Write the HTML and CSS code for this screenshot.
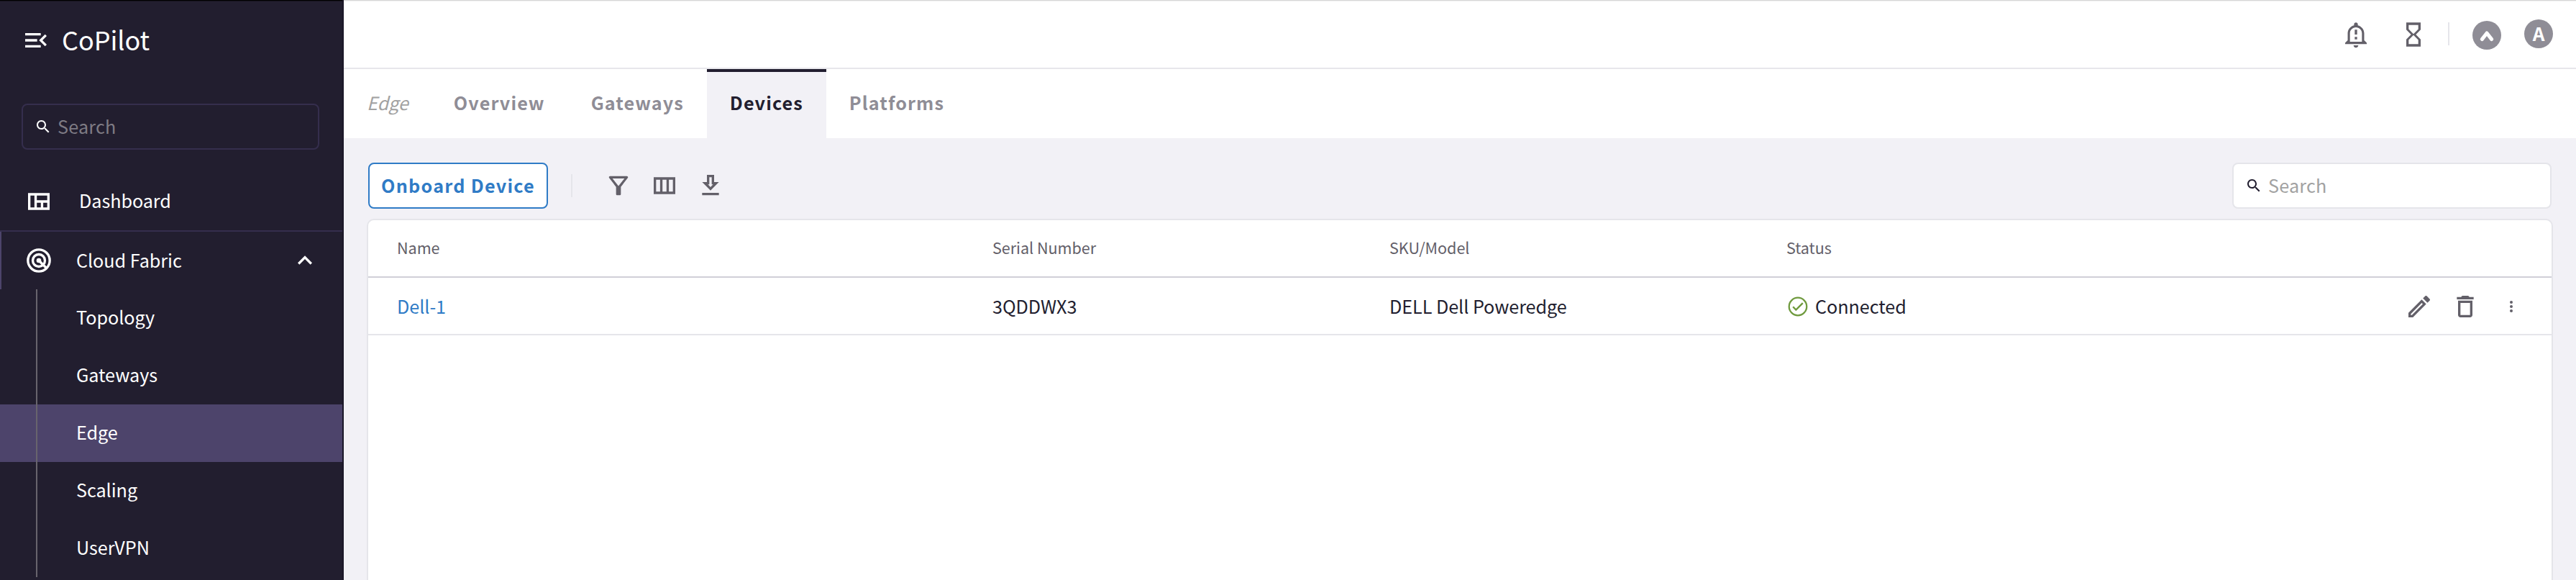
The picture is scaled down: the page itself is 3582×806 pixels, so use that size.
FILE: index.html
```html
<!DOCTYPE html>
<html lang="en">
<head>
<meta charset="utf-8">
<meta name="viewport" content="width=device-width, initial-scale=1.0">
<title>CoPilot - Edge Devices</title>
<link rel="stylesheet" href="styles.css">
</head>
<body>
<aside class="sidebar">
  <div class="brand">
    <svg class="icon" viewBox="0 0 24 24"><path d="M3 18h13v-2H3v2zm0-5h10v-2H3v2zm0-7v2h13V6H3zm18 9.59L17.42 12 21 8.41 19.59 7l-5 5 5 5L21 15.59z"/></svg>
    <span class="brand-name">CoPilot</span>
  </div>
  <div class="search search-dark">
    <svg class="icon-sm" viewBox="0 0 24 24"><path d="M15.5 14h-.79l-.28-.27C15.41 12.59 16 11.11 16 9.5 16 5.91 13.09 3 9.5 3S3 5.91 3 9.5 5.91 16 9.5 16c1.61 0 3.09-.59 4.23-1.57l.27.28v.79l5 4.99L20.49 19l-4.99-5zm-6 0C7.01 14 5 11.99 5 9.5S7.01 5 9.5 5 14 7.01 14 9.5 11.99 14 9.5 14z"/></svg>
    <span>Search</span>
  </div>
  <nav class="nav">
    <a class="nav-item dashboard">
      <svg class="icon" viewBox="0 0 24 24"><path fill-rule="evenodd" d="M3 5h18v14H3zM5 7v10h3.33V7zM10.33 7v4H19V7zM10.33 13v4h3.34v-4zM15.67 13v4H19v-4z"/></svg>
      <span>Dashboard</span>
    </a>
    <a class="nav-item nav-group">
      <svg class="icon" viewBox="0 0 24 24"><g fill="none" stroke="currentColor" stroke-width="2"><circle cx="12" cy="12" r="9.1"/><circle cx="12" cy="12" r="5.1"/><path d="M12 12l6.3 6.3"/></g><circle cx="12" cy="12" r="2"/></svg>
      <span>Cloud Fabric</span>
      <svg class="icon chevron" viewBox="0 0 24 24"><path d="M12 8l-6 6 1.41 1.41L12 10.83l4.59 4.58L18 14z"/></svg>
    </a>
    <div class="subnav">
      <a class="sub-item">Topology</a>
      <a class="sub-item">Gateways</a>
      <a class="sub-item active">Edge</a>
      <a class="sub-item">Scaling</a>
      <a class="sub-item">UserVPN</a>
    </div>
  </nav>
</aside>

<main class="main">
  <header class="topbar">
    <svg class="icon bell" viewBox="0 0 24 24"><path fill-rule="evenodd" d="M10.01 21.01c0 1.1.89 1.99 1.99 1.99s1.99-.89 1.99-1.99zM18.88 16.82V11c0-3.25-2.25-5.97-5.29-6.69v-.72C13.59 2.71 12.88 2 12 2s-1.59.71-1.59 1.59v.72C7.37 5.03 5.12 7.75 5.12 11v5.82L3 18.94V20h18v-1.06zM17 18H7v-7c0-2.76 2.24-5 5-5s5 2.24 5 5zM11 8h2v4h-2zM11 14h2v2h-2z"/></svg>
    <svg class="icon" viewBox="0 0 24 24"><path d="M6 2v6h.01L6 8.01 10 12l-4 4 .01.01H6V22h12v-5.99h-.01L18 16l-4-4 4-3.99-.01-.01H18V2H6zm10 14.5V20H8v-3.5l4-4 4 4zm-4-5l-4-4V4h8v3.5l-4 4z"/></svg>
    <span class="divider"></span>
    <span class="circle circle-logo"><svg viewBox="0 0 40 40"><path d="M13.3 25.6L20 17l6.7 8.6" fill="none" stroke="#fff" stroke-width="5" stroke-linecap="round" stroke-linejoin="round"/></svg></span>
    <span class="circle avatar">A</span>
  </header>

  <div class="tabs">
    <span class="crumb">Edge</span>
    <a class="tab">Overview</a>
    <a class="tab">Gateways</a>
    <a class="tab tab-active">Devices</a>
    <a class="tab">Platforms</a>
  </div>

  <section class="content">
    <div class="toolbar">
      <button class="btn">Onboard Device</button>
      <span class="divider"></span>
      <div class="tools">
        <svg class="icon" viewBox="0 0 24 24"><path d="M7 6h10l-5.01 6.3L7 6zm-2.75-.39C6.27 8.2 10 13 10 13v6c0 .55.45 1 1 1h2c.55 0 1-.45 1-1v-6s3.72-4.8 5.74-7.39c.51-.66.04-1.61-.79-1.61H5.04c-.83 0-1.3.95-.79 1.61z"/></svg>
        <svg class="icon" viewBox="0 0 24 24"><path fill-rule="evenodd" d="M3 5h18v14H3zM5 7v10h3.33V7zM10.33 7v10h3.34V7zM15.67 7v10H19V7z"/></svg>
        <svg class="icon" viewBox="0 0 24 24"><path d="M19 9h-4V3H9v6H5l7 7 7-7zm-8 2V5h2v6h1.17L12 13.17 9.83 11H11zm-6 7h14v2H5z"/></svg>
      </div>
      <div class="search search-light">
        <svg class="icon-sm" viewBox="0 0 24 24"><path d="M15.5 14h-.79l-.28-.27C15.41 12.59 16 11.11 16 9.5 16 5.91 13.09 3 9.5 3S3 5.91 3 9.5 5.91 16 9.5 16c1.61 0 3.09-.59 4.23-1.57l.27.28v.79l5 4.99L20.49 19l-4.99-5zm-6 0C7.01 14 5 11.99 5 9.5S7.01 5 9.5 5 14 7.01 14 9.5 11.99 14 9.5 14z"/></svg>
        <span>Search</span>
      </div>
    </div>

    <div class="table">
      <div class="row row-head">
        <span>Name</span>
        <span>Serial Number</span>
        <span>SKU/Model</span>
        <span>Status</span>
      </div>
      <div class="row">
        <a class="link">Dell-1</a>
        <span>3QDDWX3</span>
        <span>DELL Dell Poweredge</span>
        <span class="status">
          <svg class="icon-status" viewBox="0 0 24 24"><g fill="none" stroke="currentColor"><circle cx="12" cy="12" r="9.2" stroke-width="1.7"/><path d="M6.9 12.2l3.1 3.2 7.1-7.1" stroke-width="1.8"/></g></svg>
          Connected
        </span>
        <span class="actions">
          <svg class="icon" viewBox="0 0 24 24"><path d="M14.06 9.02l.92.92L5.92 19H5v-.92l9.06-9.06M17.66 3c-.25 0-.51.1-.7.29l-1.83 1.83 3.75 3.75 1.83-1.83c.39-.39.39-1.02 0-1.41l-2.34-2.34c-.2-.2-.45-.29-.71-.29zm-3.6 3.19L3 17.25V21h3.75L17.81 9.94l-3.75-3.75z"/></svg>
          <svg class="icon" viewBox="0 0 24 24"><path d="M6 19c0 1.1.9 2 2 2h8c1.1 0 2-.9 2-2V7H6v12zM8 9h8v10H8V9zm7.5-5l-1-1h-5l-1 1H5v2h14V4h-3.5z"/></svg>
          <svg class="icon-sm more" viewBox="0 0 24 24"><circle cx="12" cy="6" r="2"/><circle cx="12" cy="12" r="2"/><circle cx="12" cy="18" r="2"/></svg>
        </span>
      </div>
    </div>
  </section>
</main>
</body>
</html>
```
FILE: styles.css
```css
* { box-sizing: border-box; }

body {
  margin: 0;
  height: 806px;
  display: flex;
  overflow: hidden;
  font-family: "Noto Sans CJK SC", "Noto Sans", sans-serif;
  font-size: 25.2px;
  line-height: 36px;
  letter-spacing: -0.05px;
  color: #221e2f;
  background: #f2f1f6;
}

svg { display: block; fill: currentColor; flex: none; }
.icon { width: 40px; height: 40px; }
.icon-sm { width: 24px; height: 24px; }

/* sidebar */
.sidebar {
  width: 478px;
  flex: none;
  background: #221e2f;
  color: #fff;
  border-right: 2px solid #1b1728;
  box-shadow: inset 0 1px #000, inset 0 2px #16131f;
}
.brand { display: flex; align-items: center; height: 112px; padding: 0 0 0 30px; }
.brand-name { font-size: 36px; margin-left: 16px; padding-bottom: 4px; }

.search {
  display: flex;
  align-items: center;
  height: 64px;
  padding-left: 16px;
  border: 2px solid #e5e5ea;
  border-radius: 8px;
  gap: 8px;
}
.search span { padding-bottom: 2px; letter-spacing: 0.2px; }
.search-dark { width: 414px; margin: 32px 0 0 30px; border-color: #352e4d; }
.search-dark span { color: #7e7b84; }
.search-light { width: 444px; margin-left: auto; margin-right: 2px; background: #fff; }
.search-light span { color: #a2a2a2; }

.nav { margin-top: 32px; }
.nav-item { display: flex; align-items: center; height: 80px; padding-left: 34px; }
.nav-item span { margin-left: 36px; padding-bottom: 4px; }
.dashboard { border-bottom: 2px solid #352e4d; height: 82px; }
.nav-group { border-left: 2px solid #4d446b; padding-left: 32px; }
.nav-group span { margin-left: 32px; padding-bottom: 2px; }
.chevron { margin-left: auto; margin-right: 32px; }

.subnav {
  background: linear-gradient(#68646d, #68646d) 50px 0 / 2px 400px no-repeat;
}
.sub-item { display: flex; align-items: center; height: 80px; padding: 0 0 4px 106px; }
.active {
  background: linear-gradient(#68646d, #68646d) 50px 0 / 2px 80px no-repeat #4d446b;
}

/* top bar */
.main { flex: 1; display: flex; flex-direction: column; min-width: 0; }
.topbar {
  display: flex;
  align-items: center;
  justify-content: flex-end;
  height: 96px;
  padding-right: 32px;
  background: #fff;
  border-bottom: 2px solid #e7e6eb;
  box-shadow: inset 0 1px #d6d6d6, inset 0 2px #f1f1f1;
  color: #636069;
}
.topbar .icon { margin-top: 2px; }
.bell { margin-right: 40px; }
.divider { width: 2px; height: 32px; background: #e5e5ea; }
.topbar .divider { margin: 0 32px 0 28px; }
.circle {
  width: 40px;
  height: 40px;
  border-radius: 50%;
  background: #8f8d96;
  color: #fff;
}
.circle-logo { margin-right: 32px; margin-top: 4px; }
.avatar {
  line-height: 38px;
  text-align: center;
  font-weight: 700;
  font-size: 26px;
  letter-spacing: 0;
}

.tabs { display: flex; height: 96px; background: #fff; line-height: 84px; padding-left: 32px; }
.crumb { font-style: italic; color: #a2a2a2; margin-right: 31px; border-top: 4px solid transparent; }
.tab {
  padding: 0 32px;
  font-weight: 700;
  letter-spacing: 1.1px;
  color: #8f8d96;
  border-top: 4px solid transparent;
}
.tab-active { background: #f2f1f6; color: #221e2f; border-top-color: #221e2f; }

/* devices list */
.content { flex: 1; display: flex; flex-direction: column; padding: 34px 32px 0; }
.toolbar { display: flex; align-items: center; height: 64px; padding-left: 2px; }
.btn {
  width: 250px;
  height: 64px;
  padding: 0 0 2px;
  border: 2px solid #2f7bc6;
  border-radius: 8px;
  background: #fff;
  color: #2f7bc6;
  font: inherit;
  font-weight: 700;
  letter-spacing: 1.25px;
  white-space: nowrap;
}
.toolbar .divider { margin: 0 44px 0 32px; }
.tools { display: flex; gap: 24px; color: #636069; }

.table {
  flex: 1;
  margin-top: 14px;
  background: #fff;
  border: 2px solid #e5e5ea;
  border-bottom: 0;
  border-radius: 10px 10px 0 0;
}
.row {
  display: grid;
  grid-template-columns: 828px 552px 552px 1fr auto;
  align-items: center;
  height: 80px;
  padding: 0 44px 0 40px;
  border-bottom: 2px solid #e5e5ea;
}
.row-head { font-size: 21.6px; color: #636069; border-bottom-color: #d0cfd8; padding-bottom: 2px; }
.link { color: #2f7bc6; }
.status { display: flex; align-items: center; gap: 8px; }
.icon-status { width: 32px; height: 32px; margin-top: 2px; color: #6f9a3e; }
.actions { display: flex; align-items: center; gap: 24px; margin-top: 2px; color: #636069; }
.more { margin-left: 8px; }
```
